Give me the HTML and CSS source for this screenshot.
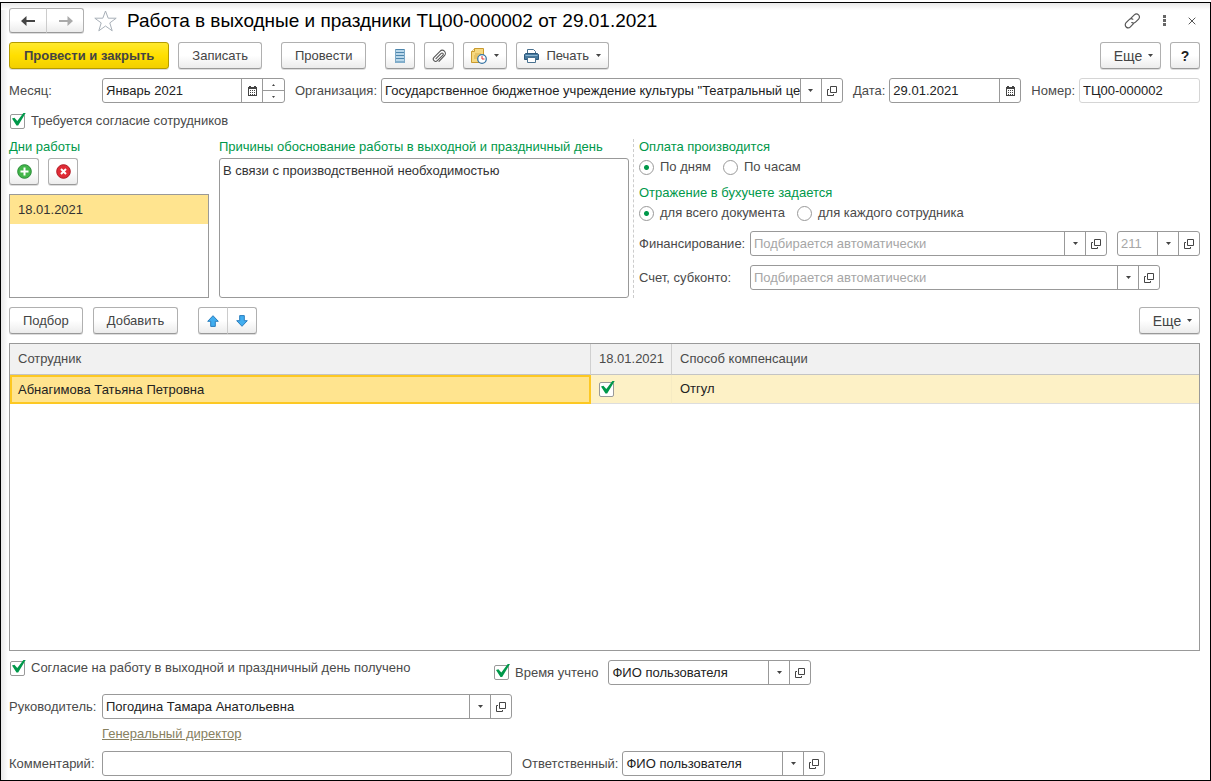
FILE: index.html
```html
<!DOCTYPE html>
<html lang="ru">
<head>
<meta charset="utf-8">
<meta name="viewport" content="width=device-width, initial-scale=1">
<title>Работа в выходные и праздники</title>
<link rel="stylesheet" href="styles.css">
</head>
<body>
<svg class="sprite" aria-hidden="true">
  <symbol id="i-down" viewBox="0 0 5 3"><path d="M0 0h5L2.5 3z" fill="#444"/></symbol>
  <symbol id="i-open" viewBox="0 0 10 10"><path d="M3.5.5h6v6h-6z M2 3.5H.5v6h6V8" fill="none" stroke="#444"/></symbol>
  <symbol id="i-cal" viewBox="0 0 9 10"><path d="M0 1h1V0h2v1h3V0h2v1h1v9H0z" fill="#444"/><path d="M1 3h7v6H1z" fill="#fff"/><path d="M2 4h1v1H2zM4 4h1v1H4zM6 4h1v1H6zM2 6h1v1H2zM4 6h1v1H4zM6 6h1v1H6zM2 8h1v1H2zM4 8h1v1H4zM6 8h1v1H6z" fill="#444"/></symbol>
  <symbol id="i-arrow" viewBox="0 0 15 10"><path d="M0 5 5.500 0V4H14V6H5.500V10z" fill="currentColor"/></symbol>
  <symbol id="i-up" viewBox="0 0 12 12"><path d="M6 .7 11.3 6.3H8.3V11.4H3.7V6.3H.7z" fill="#41aef0" stroke="#2a7dbd" stroke-linejoin="round"/></symbol>
</svg>
<main class="window">
  <header class="title-row">
    <div class="group nav">
      <button class="btn" type="button" aria-label="Назад"><svg width="15" height="10"><use href="#i-arrow"/></svg></button>
      <button class="btn forward" type="button" aria-label="Вперед"><svg class="mirror" width="15" height="10"><use href="#i-arrow"/></svg></button>
    </div>
    <button class="plain" type="button" aria-label="В избранное">
      <svg width="23" height="22" viewBox="0 0 23 22"><path d="M11.5 1 14.2 8.2H22.2L15.8 12.9 18.2 20.8 11.5 16 4.8 20.8 7.2 12.9.8 8.2H8.8z" fill="#fff" stroke="#a8b0b8"/></svg>
    </button>
    <h1 class="title">Работа в выходные и праздники ТЦ00-000002 от 29.01.2021</h1>
    <div class="window-tools">
      <button class="plain" type="button" aria-label="Ссылка">
        <svg width="17" height="16" viewBox="0 0 17 16"><g fill="none" stroke="#555" stroke-width="1.2" stroke-linecap="round"><path d="M7 5.2 10.3 1.9a3 3 0 0 1 4.3 4.2L11.5 9.2a3 3 0 0 1-3.7.4"/><path d="M9.5 10.7 6.4 13.9a3 3 0 0 1-4.3-4.2L5.2 6.6a3 3 0 0 1 3.6-.4"/></g></svg>
      </button>
      <button class="plain" type="button" aria-label="Меню">
        <svg width="3" height="11" viewBox="0 0 3 11"><path d="M0 0h3v3H0zM0 4h3v3H0zM0 8h3v3H0z" fill="#666"/></svg>
      </button>
      <button class="plain" type="button" aria-label="Закрыть">
        <svg width="8" height="8" viewBox="0 0 8 8"><path d="M.7.7 7.3 7.3M7.3.7.7 7.3" stroke="#555"/></svg>
      </button>
    </div>
  </header>

  <div class="toolbar main-tools">
    <button class="btn primary" type="button">Провести и закрыть</button>
    <button class="btn" type="button">Записать</button>
    <button class="btn apart" type="button">Провести</button>
    <button class="btn icon apart" type="button" aria-label="Движения документа">
      <svg width="10" height="14" viewBox="0 0 10 14"><path d="M0 0h10v14H0z" fill="#b9d7ea"/><path d="M0 .5h10M0 3.500h10M0 6.500h10M0 9.500h10M0 13h10" stroke="#4d86ad"/><path d="M.5 0v14M9.500 0v14" stroke="#7ba8c6"/></svg>
    </button>
    <button class="btn icon" type="button" aria-label="Присоединенные файлы">
      <svg width="14" height="14" viewBox="0 0 14 14"><path d="M4 9.6 9.2 4.4a1.2 1.2 0 0 1 1.7 1.7L5.3 11.700a2.300 2.300 0 0 1-3.300-3.300L8 2.300a3 3 0 0 1 4.500 4.300L7 12.300" fill="none" stroke="#555" stroke-width="1.100" stroke-linecap="round"/></svg>
    </button>
    <button class="btn drop" type="button" aria-label="Создать на основании">
      <svg width="16" height="16" viewBox="0 0 16 16"><path d="M3.500.5H12.500V14.500H.5V3.500z" fill="#f7d980" stroke="#c99a2e"/><path d="M.5 3.500h3v-3" fill="#fff1bd" stroke="#c99a2e"/><path d="M4 6h6M3 8h4M3 10h3" stroke="#d6ad4d"/><circle cx="11" cy="11" r="4.300" fill="#fff" stroke="#3875a5" stroke-width="1.300"/><path d="M11 8v3h2.500" fill="none" stroke="#d33"/></svg>
      <svg width="5" height="3"><use href="#i-down"/></svg>
    </button>
    <button class="btn drop" type="button">
      <svg width="15" height="14" viewBox="0 0 15 14"><path d="M3.500 5V.5h6l2 2V5" fill="#fff" stroke="#49718f"/><path d="M1.500 4.500h12l1 1v5h-14v-5z" fill="#46799f" stroke="#2e587a"/><path d="M1.500 6.500h12" stroke="#8eb6d1"/><path d="M3.500 8.500h8v5h-8z" fill="#fff" stroke="#49718f"/></svg>
      <span class="caption">Печать</span>
      <svg width="5" height="3"><use href="#i-down"/></svg>
    </button>
    <button class="btn more push" type="button">Еще <svg width="5" height="3"><use href="#i-down"/></svg></button>
    <button class="btn icon help" type="button">?</button>
  </div>

  <div class="row tight head-fields">
    <label class="lead" for="month">Месяц:</label>
    <div class="field w-month">
      <input id="month" type="text" value="Январь 2021">
      <button type="button" aria-label="Выбрать месяц"><svg width="9" height="10"><use href="#i-cal"/></svg></button>
      <div class="spin">
        <button type="button" aria-label="Больше"><svg class="flip" width="3" height="2"><use href="#i-down"/></svg></button>
        <button type="button" aria-label="Меньше"><svg width="3" height="2"><use href="#i-down"/></svg></button>
      </div>
    </div>
    <label class="after" for="org">Организация:</label>
    <div class="field grow">
      <input id="org" type="text" value="Государственное бюджетное учреждение культуры &quot;Театральный центр&quot;">
      <button type="button" aria-label="Список"><svg width="5" height="3"><use href="#i-down"/></svg></button>
      <button type="button" aria-label="Открыть"><svg width="10" height="10"><use href="#i-open"/></svg></button>
    </div>
    <label class="after" for="date">Дата:</label>
    <div class="field w-date">
      <input id="date" type="text" value="29.01.2021">
      <button type="button" aria-label="Выбрать дату"><svg width="9" height="10"><use href="#i-cal"/></svg></button>
    </div>
    <label class="after" for="num">Номер:</label>
    <div class="field pale w-num"><input id="num" type="text" value="ТЦ00-000002"></div>
  </div>

  <label class="check consent"><input type="checkbox" checked>Требуется согласие сотрудников</label>

  <div class="sections">
    <section class="days">
      <h2>Дни работы</h2>
      <div class="day-tools">
        <button class="btn icon" type="button" aria-label="Добавить день"><svg width="15" height="15" viewBox="0 0 15 15"><circle cx="7.500" cy="7.500" r="6.800" fill="#43b649" stroke="#268a35"/><path d="M7.500 3.500v8M3.500 7.500h8" stroke="#fff" stroke-width="2"/></svg></button>
        <button class="btn icon" type="button" aria-label="Удалить день"><svg width="15" height="15" viewBox="0 0 15 15"><circle cx="7.500" cy="7.500" r="6.800" fill="#e02b35" stroke="#b01822"/><path d="M5 5l5 5M10 5l-5 5" stroke="#fff" stroke-width="2"/></svg></button>
      </div>
      <ul class="day-list"><li>18.01.2021</li></ul>
    </section>
    <section class="reason">
      <h2><label for="reason">Причины обоснование работы в выходной и праздничный день</label></h2>
      <textarea id="reason">В связи с производственной необходимостью</textarea>
    </section>
    <section class="options">
      <h2>Оплата производится</h2>
      <div class="radios">
        <label><input type="radio" name="pay" checked>По дням</label>
        <label><input type="radio" name="pay">По часам</label>
      </div>
      <h2>Отражение в бухучете задается</h2>
      <div class="radios">
        <label><input type="radio" name="acc" checked>для всего документа</label>
        <label><input type="radio" name="acc">для каждого сотрудника</label>
      </div>
      <div class="row finance">
        <label class="opt" for="fin">Финансирование:</label>
        <div class="field grow">
          <input id="fin" type="text" placeholder="Подбирается автоматически">
          <button type="button" aria-label="Список"><svg width="5" height="3"><use href="#i-down"/></svg></button>
          <button type="button" aria-label="Открыть"><svg width="10" height="10"><use href="#i-open"/></svg></button>
        </div>
        <div class="field w-code">
          <input type="text" placeholder="211" aria-label="Код статьи">
          <button type="button" aria-label="Список"><svg width="5" height="3"><use href="#i-down"/></svg></button>
          <button type="button" aria-label="Открыть"><svg width="10" height="10"><use href="#i-open"/></svg></button>
        </div>
      </div>
      <div class="row account">
        <label class="opt" for="acct">Счет, субконто:</label>
        <div class="field grow">
          <input id="acct" type="text" placeholder="Подбирается автоматически">
          <button type="button" aria-label="Список"><svg width="5" height="3"><use href="#i-down"/></svg></button>
          <button type="button" aria-label="Открыть"><svg width="10" height="10"><use href="#i-open"/></svg></button>
        </div>
      </div>
    </section>
  </div>

  <div class="toolbar">
    <button class="btn" type="button">Подбор</button>
    <button class="btn" type="button">Добавить</button>
    <div class="group apart">
      <button class="btn icon" type="button" aria-label="Вверх"><svg width="12" height="12"><use href="#i-up"/></svg></button>
      <button class="btn icon" type="button" aria-label="Вниз"><svg class="flip" width="12" height="12"><use href="#i-up"/></svg></button>
    </div>
    <button class="btn more push" type="button">Еще <svg width="5" height="3"><use href="#i-down"/></svg></button>
  </div>

  <div class="table-box">
    <table>
      <colgroup><col class="c-name"><col class="c-day"><col></colgroup>
      <thead><tr><th>Сотрудник</th><th>18.01.2021</th><th>Способ компенсации</th></tr></thead>
      <tbody><tr><td class="current">Абнагимова Татьяна Петровна</td><td><input type="checkbox" checked aria-label="18.01.2021"></td><td>Отгул</td></tr></tbody>
    </table>
  </div>

  <footer class="bottom">
    <div class="row agreed">
      <label class="check"><input type="checkbox" checked>Согласие на работу в выходной и праздничный день получено</label>
      <label class="check counted"><input type="checkbox" checked>Время учтено</label>
      <div class="field w-user">
        <input type="text" value="ФИО пользователя" aria-label="Время учел">
        <button type="button" aria-label="Список"><svg width="5" height="3"><use href="#i-down"/></svg></button>
        <button type="button" aria-label="Открыть"><svg width="10" height="10"><use href="#i-open"/></svg></button>
      </div>
    </div>
    <div class="row tight">
      <label class="lead" for="boss">Руководитель:</label>
      <div class="field w-long">
        <input id="boss" type="text" value="Погодина Тамара Анатольевна">
        <button type="button" aria-label="Список"><svg width="5" height="3"><use href="#i-down"/></svg></button>
        <button type="button" aria-label="Открыть"><svg width="10" height="10"><use href="#i-open"/></svg></button>
      </div>
    </div>
    <a class="post" href="#">Генеральный директор</a>
    <div class="row tight">
      <label class="lead" for="note">Комментарий:</label>
      <div class="field w-long"><input id="note" type="text"></div>
      <label class="after" for="resp">Ответственный:</label>
      <div class="field w-user">
        <input id="resp" type="text" value="ФИО пользователя">
        <button type="button" aria-label="Список"><svg width="5" height="3"><use href="#i-down"/></svg></button>
        <button type="button" aria-label="Открыть"><svg width="10" height="10"><use href="#i-open"/></svg></button>
      </div>
    </div>
  </footer>
</main>
</body>
</html>
```
FILE: styles.css
```css
* { box-sizing: border-box; }
body {
  margin: 0;
  padding-top: 2px;
  background: #fff;
  color: #4a4a4a;
  font: 13px/16px "Liberation Sans", Arial, sans-serif;
}
button, input, textarea { font: inherit; color: inherit; margin: 0; }
svg { display: block; flex: none; }
.sprite { position: absolute; width: 0; height: 0; }
.flip { transform: scaleY(-1); }
.mirror { transform: scaleX(-1); }

.window {
  display: flex;
  flex-direction: column;
  min-height: calc(100vh - 2px);
  padding: 5px 10px 4px 8px;
  border: 1px solid #000;
  background:
    linear-gradient(#e9e9e9, #fff) 0 0 / 100% 7px no-repeat,
    linear-gradient(90deg, #e9e9e9, #fff) 0 0 / 7px 100% no-repeat,
    #fff;
}

.title-row { display: flex; align-items: center; height: 25px; margin-bottom: 9px; }
.title { margin: 0 0 0 10px; flex: 1; font-size: 19px; line-height: 24px; font-weight: normal; color: #000; }
.plain { padding: 0; border: 0; background: none; }
.title-row > .plain { margin-left: 10px; }
.window-tools { display: flex; align-items: center; gap: 22px; padding-right: 4px; }

.btn {
  display: flex;
  align-items: center;
  justify-content: center;
  height: 27px;
  padding: 0 13px;
  border: 1px solid #b0b0b0;
  border-bottom-color: #999;
  border-radius: 3px;
  background: linear-gradient(#fff 50%, #ececec);
  box-shadow: 0 1px 0 #ddd;
  color: #444;
  white-space: nowrap;
}
.btn.primary {
  padding: 0 14px;
  border-color: #b39b00;
  background: linear-gradient(#ffe92e, #ffdf00 50%, #f2cf00);
  font-weight: bold;
}
.btn.icon { width: 30px; padding: 0; }
.btn.help { font-size: 14px; font-weight: bold; color: #222; }
.btn.drop { padding: 0 7px; gap: 7px; }
.btn.more { width: 61px; padding: 0 0 0 6px; gap: 6px; font-size: 14px; }
.group { display: flex; }
.group .btn:first-child { border-radius: 3px 0 0 3px; }
.group .btn + .btn { margin-left: -1px; border-radius: 0 3px 3px 0; border-left-color: #ccc; }
.nav .btn { width: 38px; height: 25px; padding: 0; }
.nav .forward { color: #aaa; }

.toolbar { display: flex; gap: 10px; }
.toolbar > .apart { margin-left: 10px; }
.toolbar > .push { margin-left: auto; }
.main-tools { gap: 9px; }

.row { display: flex; align-items: center; gap: 6px; }
.row.tight { gap: 4px; }
.field {
  display: flex;
  flex: none;
  height: 25px;
  border: 1px solid #999;
  border-radius: 3px;
  background: #fff;
  color: #222;
  overflow: hidden;
}
.field.grow { flex: 1; min-width: 0; }
.field.pale { border-color: #d5d5d5; }
.field input { flex: 1; min-width: 0; padding: 0 3px; border: 0; background: none; outline: none; }
.field.grow input { padding-right: 0; }
.field input::placeholder { color: #a6a6a6; opacity: 1; }
.field > button {
  display: flex;
  align-items: center;
  justify-content: center;
  width: 21px;
  padding: 0;
  border: 0;
  border-left: 1px solid #999;
  background: none;
}
.spin { display: flex; flex-direction: column; width: 22px; border-left: 1px solid #999; }
.spin button { display: flex; flex: 1; align-items: center; justify-content: center; padding: 0; border: 0; background: none; }
.spin button + button { border-top: 1px solid #999; }
.lead { width: 89px; white-space: nowrap; }
.after { margin-left: 6px; }
.w-month { width: 183px; }
.w-date { width: 132px; }
.w-num { width: 121px; }
.w-code { width: 83px; }
.w-user { width: 203px; }
.w-long { width: 410px; }
.head-fields { margin-top: 9px; }

.check { display: flex; align-items: center; gap: 6px; padding-left: 1px; }
.consent { margin: 10px 0; align-self: flex-start; }
input[type="checkbox"] {
  appearance: none;
  position: relative;
  flex: none;
  width: 15px;
  height: 15px;
  border: 1px solid #999;
  border-radius: 2px;
  background: #fff;
}
input[type="checkbox"]:checked::after {
  content: "";
  position: absolute;
  left: 1px;
  top: -2px;
  width: 14px;
  height: 13px;
  background: #00984a;
  clip-path: polygon(0 46%, 17% 40%, 38% 66%, 84% 0, 100% 0, 44% 100%, 32% 100%);
}
input[type="radio"] {
  appearance: none;
  width: 15px;
  height: 15px;
  border: 1px solid #999;
  border-radius: 50%;
  background: #fff;
}
input[type="radio"]:checked { background: radial-gradient(circle, #00984a 2px, #fff 3px); }

h2 { margin: 0; font: inherit; color: #00984a; white-space: nowrap; }
.sections { display: grid; grid-template-columns: 200px 410px 1fr; column-gap: 10px; margin-bottom: 9px; }
.days, .reason { display: flex; flex-direction: column; gap: 3px; }
.day-tools { display: flex; gap: 9px; margin-bottom: 6px; }
.day-list { flex: 1; margin: 0; padding: 0; list-style: none; border: 1px solid #999; color: #333; }
.day-list li { padding: 7px 8px 6px; background: #ffe48f; }
.reason textarea {
  flex: 1;
  width: 100%;
  min-height: 140px;
  padding: 4px 3px;
  border: 1px solid #999;
  border-radius: 3px;
  background: #fff;
  color: #333;
  resize: none;
  outline: none;
}
.options { position: relative; }
.options::before { content: ""; position: absolute; left: -6px; top: 0; bottom: 0; border-left: 1px dashed #ccc; }
.radios { display: flex; gap: 11px; margin: 4px 0 10px; }
.radios label { display: flex; align-items: center; gap: 6px; }
.radios label + label { padding-left: 1px; }
.opt { width: 105px; white-space: nowrap; }
.finance .w-code { margin-left: 4px; }
.account { margin: 9px 40px 8px 0; }

.table-box { flex: 1; min-height: 120px; margin-top: 9px; border: 1px solid #999; }
table { width: 100%; border-collapse: separate; border-spacing: 0; table-layout: fixed; }
.c-name { width: 581px; }
.c-day { width: 81px; }
th { height: 31px; padding: 0 8px; border-right: 1px solid #d0d0d0; border-bottom: 1px solid #c4c4c4; background: #f1f1f1; font-weight: normal; text-align: left; white-space: nowrap; }
td { height: 29px; padding: 0 8px; border-right: 1px solid #f6ebc3; border-bottom: 1px solid #ddd; background: #fdf1c6; color: #222; }
th:last-child, td:last-child { border-right: 0; }
td.current { padding: 0 6px; border: 2px solid #fdc822; background: #ffe48f; }
td input[type="checkbox"] { display: block; }

.bottom { display: flex; flex-direction: column; gap: 9px; padding-top: 9px; }
.agreed .check:first-child { width: 478px; align-self: flex-start; }
.counted { margin-right: 4px; }
.post { align-self: flex-start; margin: -2px 0 0 93px; color: #87805f; }
```
